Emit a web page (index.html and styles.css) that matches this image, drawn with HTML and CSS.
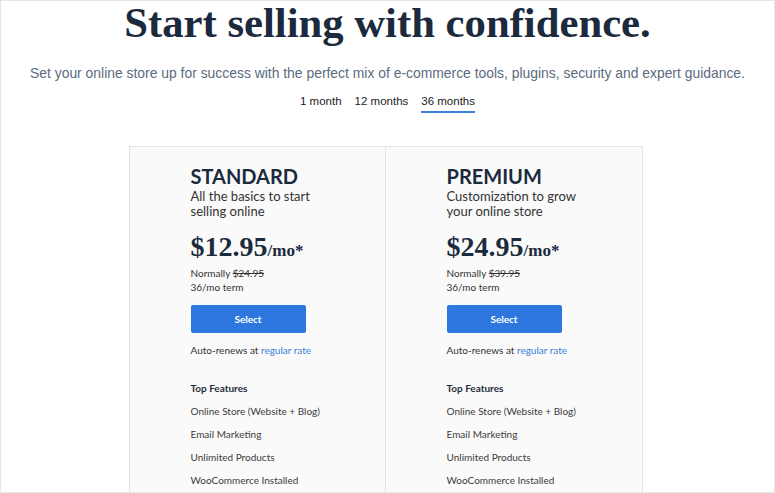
FILE: index.html
```html
<!DOCTYPE html>
<html>
<head>
<meta charset="utf-8">
<link rel="stylesheet" href="styles.css">
</head>
<body>
<div class="frame">
  <h1 class="title">Start selling with confidence.</h1>
  <p class="lead">Set your online store up for success with the perfect mix of e-commerce tools, plugins, security and expert guidance.</p>
  <nav class="tabs">
    <span class="tab">1 month</span>
    <span class="tab">12 months</span>
    <span class="tab active">36 months</span>
  </nav>
  <div class="plans">
    <section class="card">
      <h2 class="plan-name">STANDARD</h2>
      <p class="plan-desc">All the basics to start<br>selling online</p>
      <div class="price"><span class="amount">$12.95</span><span class="per">/mo*</span></div>
      <p class="meta">Normally <s>$24.95</s><br>36/mo term</p>
      <button class="select">Select</button>
      <p class="renew">Auto-renews at <a class="link">regular rate</a></p>
      <h3 class="feat-title">Top Features</h3>
      <ul class="features">
        <li>Online Store (Website + Blog)</li>
        <li>Email Marketing</li>
        <li>Unlimited Products</li>
        <li>WooCommerce Installed</li>
      </ul>
    </section>
    <section class="card">
      <h2 class="plan-name">PREMIUM</h2>
      <p class="plan-desc">Customization to grow<br>your online store</p>
      <div class="price"><span class="amount">$24.95</span><span class="per">/mo*</span></div>
      <p class="meta">Normally <s>$39.95</s><br>36/mo term</p>
      <button class="select">Select</button>
      <p class="renew">Auto-renews at <a class="link">regular rate</a></p>
      <h3 class="feat-title">Top Features</h3>
      <ul class="features">
        <li>Online Store (Website + Blog)</li>
        <li>Email Marketing</li>
        <li>Unlimited Products</li>
        <li>WooCommerce Installed</li>
      </ul>
    </section>
  </div>
</div>
</body>
</html>
```
FILE: styles.css
```css
html, body { margin: 0; padding: 0; background: #fff; }
.frame {
  box-sizing: border-box;
  width: 775px;
  height: 493px;
  border: 1px solid #e6e6e6;
  overflow: hidden;
  display: flex;
  flex-direction: column;
  align-items: center;
}
.title {
  margin: 0;
  padding-top: 0;
  font-family: "Liberation Serif", serif;
  font-weight: 700;
  font-size: 42.7px;
  line-height: 44px;
  color: #1c2a3d;
}
.lead {
  margin: 20px 0 0;
  font-family: "Liberation Sans", Arial, sans-serif;
  font-size: 13.9px;
  line-height: 16px;
  color: #5b6b80;
}
.tabs {
  margin-top: 13px;
  display: flex;
  gap: 13px;
  font-family: "Liberation Sans", Arial, sans-serif;
  font-size: 11.5px;
  color: #222;
}
.tab { padding-bottom: 3px; border-bottom: 2px solid transparent; line-height: 14px; }
.tab.active { border-bottom-color: #3d7fdc; }
.plans {
  margin-top: 33px;
  margin-right: 4px;
  display: flex;
}
.card {
  box-sizing: border-box;
  width: 257px;
  height: 400px;
  background: #fafafa;
  border: 1px solid #e3e3e3;
  padding: 18px 0 0 61px;
  font-family: Lato, "Liberation Sans", sans-serif;
  color: #1e2b3b;
}
.card + .card { border-left: none; width: 257px; padding-left: 61px; }
.plan-name {
  margin: 0;
  font-size: 20px;
  line-height: 22px;
  font-weight: 700;
  color: #1c2a3d;
}
.plan-desc {
  margin: 2px 0 0;
  font-size: 13px;
  line-height: 15px;
  color: #333;
}
.price {
  margin-top: 14px;
  font-family: "Liberation Serif", serif;
  font-weight: 700;
  color: #1c2a3d;
  line-height: 28px;
}
.amount { font-size: 28px; }
.per { font-size: 17px; }
.meta {
  margin: 1px 0 0;
  font-size: 10px;
  line-height: 14px;
  color: #333;
}
.select {
  display: block;
  margin-top: 11px;
  width: 115px;
  height: 28px;
  border: none;
  border-radius: 2px;
  background: #2e77de;
  color: #fff;
  font-family: Lato, "Liberation Sans", sans-serif;
  font-weight: 700;
  font-size: 10px;
}
.renew {
  margin: 11px 0 0;
  font-size: 10px;
  line-height: 13px;
  color: #333;
}
.link { color: #3a80d9; }
.feat-title {
  margin: 25px 0 0;
  font-size: 10px;
  line-height: 13px;
  font-weight: 700;
  color: #1e2b3b;
}
.features {
  list-style: none;
  margin: 0;
  padding: 0;
}
.features li {
  margin-top: 10px;
  font-size: 10px;
  line-height: 13px;
  color: #3a3a3a;
}
```
